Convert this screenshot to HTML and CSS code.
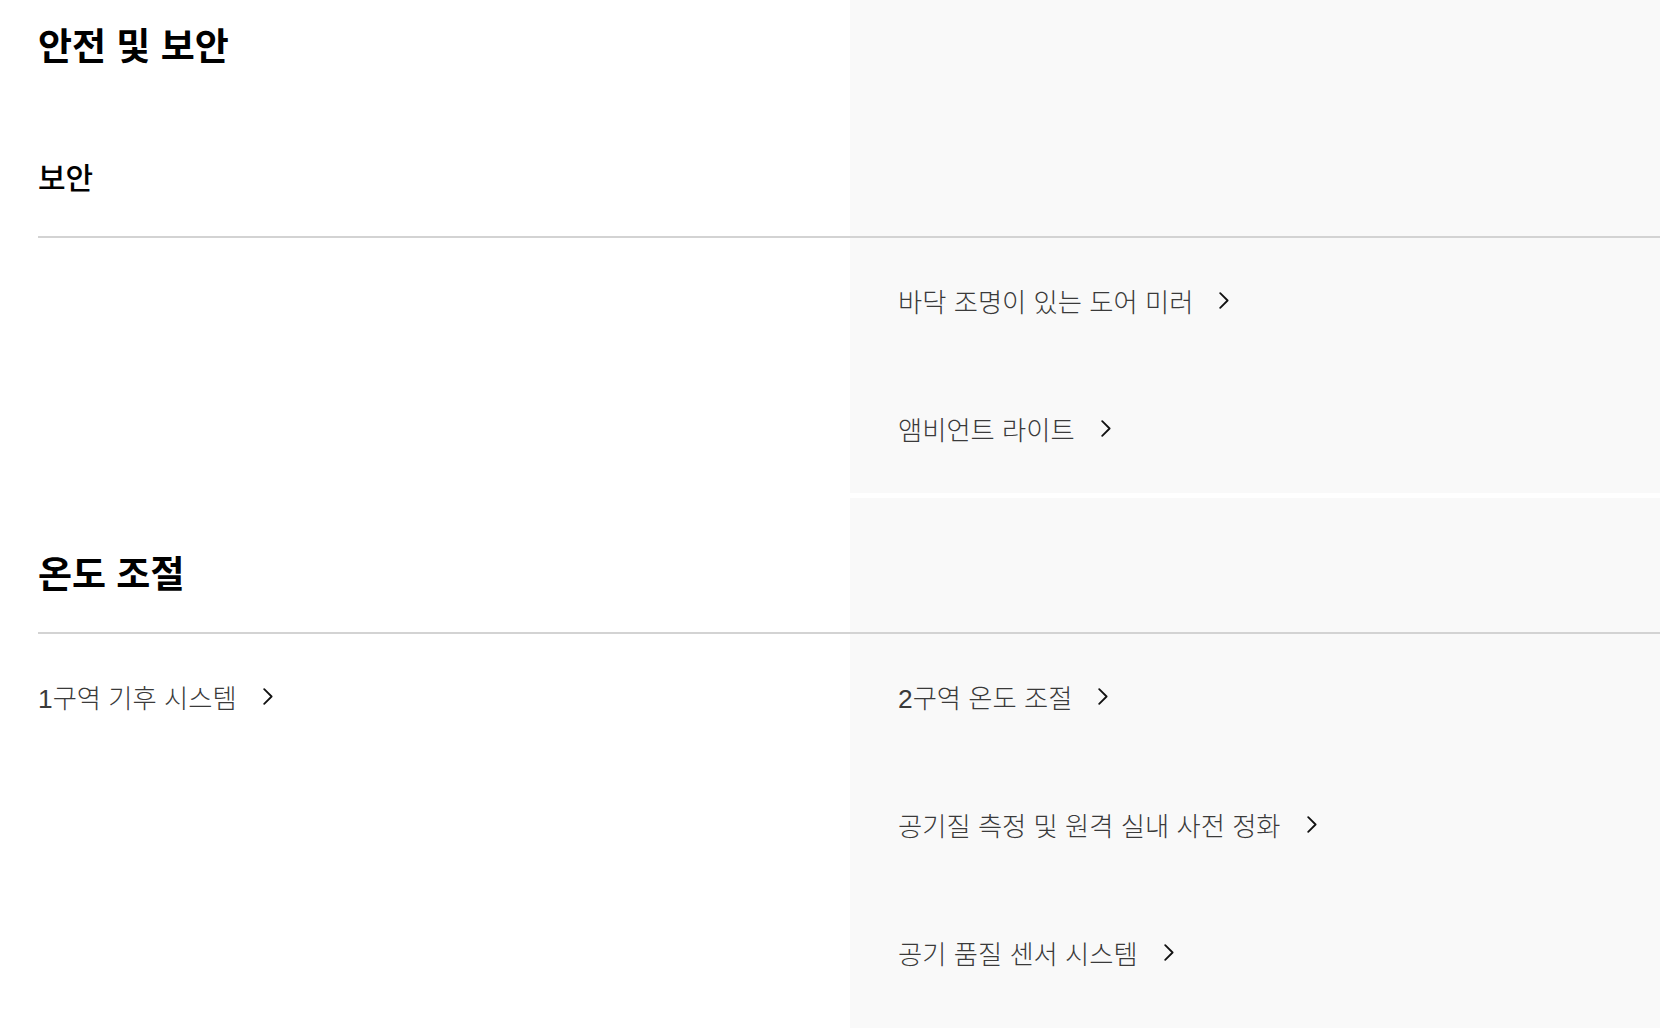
FILE: index.html
```html
<!DOCTYPE html>
<html lang="ko">
<head>
<meta charset="utf-8">
<title>안전 및 보안</title>
<link rel="stylesheet" href="styles.css">
</head>
<body>
<section class="section section-first">
  <div class="head-left">
    <h1 class="title">안전 및 보안</h1>
    <h2 class="subtitle">보안</h2>
  </div>
  <div class="head-right"></div>
  <div class="body-left"></div>
  <div class="body-right">
    <a class="item" href="#">바닥 조명이 있는 도어 미러<svg class="chev" viewBox="0 0 10 17" width="10" height="17"><polyline points="1.2,1.2 8.6,8.5 1.2,15.8"/></svg></a>
    <a class="item" href="#">앰비언트 라이트<svg class="chev" viewBox="0 0 10 17" width="10" height="17"><polyline points="1.2,1.2 8.6,8.5 1.2,15.8"/></svg></a>
  </div>
</section>
<section class="section section-second">
  <div class="head-left">
    <h1 class="title">온도 조절</h1>
  </div>
  <div class="head-right"></div>
  <div class="body-left">
    <a class="item" href="#">1구역 기후 시스템<svg class="chev" viewBox="0 0 10 17" width="10" height="17"><polyline points="1.2,1.2 8.6,8.5 1.2,15.8"/></svg></a>
  </div>
  <div class="body-right">
    <a class="item" href="#">2구역 온도 조절<svg class="chev" viewBox="0 0 10 17" width="10" height="17"><polyline points="1.2,1.2 8.6,8.5 1.2,15.8"/></svg></a>
    <a class="item" href="#">공기질 측정 및 원격 실내 사전 정화<svg class="chev" viewBox="0 0 10 17" width="10" height="17"><polyline points="1.2,1.2 8.6,8.5 1.2,15.8"/></svg></a>
    <a class="item" href="#">공기 품질 센서 시스템<svg class="chev" viewBox="0 0 10 17" width="10" height="17"><polyline points="1.2,1.2 8.6,8.5 1.2,15.8"/></svg></a>
  </div>
</section>
</body>
</html>
```

FILE: styles.css
```css
html, body {
  margin: 0;
  padding: 0;
  background: #ffffff;
}
body {
  font-family: "Liberation Sans", "Noto Sans CJK KR", sans-serif;
  color: #000;
  overflow: hidden;
}
.section {
  display: grid;
  grid-template-columns: 850px 1fr;
}
.section-second {
  margin-top: 5px;
}
.head-left {
  margin-left: 38px;
  border-bottom: 2px solid #d3d3d3;
}
.head-right {
  background: #f9f9f9;
  border-bottom: 2px solid #d3d3d3;
}
.body-left {
  margin-left: 38px;
  padding-top: 42px;
  display: flex;
  flex-direction: column;
  gap: 88px;
}
.body-right {
  background: #f9f9f9;
  padding-left: 48px;
  padding-top: 42px;
  padding-bottom: 45px;
  display: flex;
  flex-direction: column;
  gap: 88px;
}
.section-second .body-right {
  padding-bottom: 90px;
}
.section-first .head-left {
  padding-top: 24px;
  padding-bottom: 37px;
}
.section-second .head-left {
  padding-top: 54px;
  padding-bottom: 32px;
}
.title {
  margin: 0;
  font-size: 37px;
  line-height: 48px;
  font-weight: 700;
}
.subtitle {
  margin: 87px 0 0;
  font-size: 30px;
  line-height: 40px;
  font-weight: 500;
}
.item {
  display: flex;
  align-items: center;
  height: 40px;
  font-size: 26.3px;
  font-weight: 300;
  color: #3a3a3a;
  text-decoration: none;
  white-space: nowrap;
}
.chev {
  margin-left: 26px;
  fill: none;
  stroke: #111;
  stroke-width: 1.8;
  stroke-linecap: round;
  stroke-linejoin: round;
}
```
